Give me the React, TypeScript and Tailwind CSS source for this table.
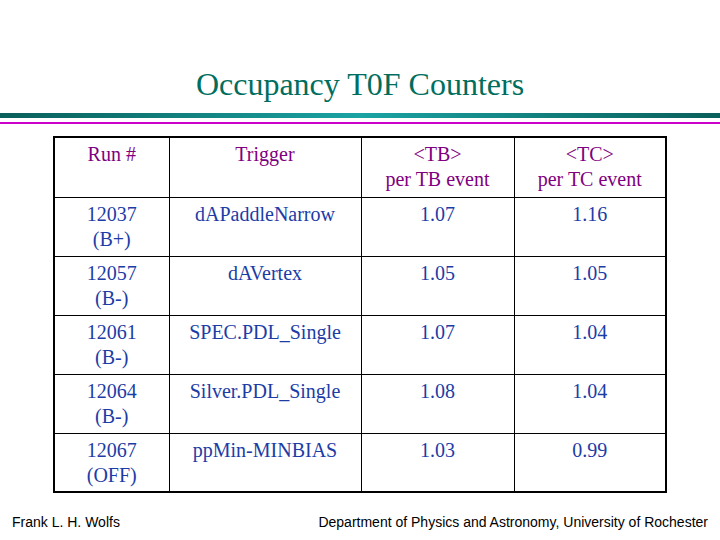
const HEAD = [
  ["Run #"],
  ["Trigger"],
  ["<TB>", "per TB event"],
  ["<TC>", "per TC event"],
];

const ROWS = [
  { run: "12037", mode: "(B+)", trigger: "dAPaddleNarrow", tb: "1.07", tc: "1.16" },
  { run: "12057", mode: "(B-)", trigger: "dAVertex", tb: "1.05", tc: "1.05" },
  { run: "12061", mode: "(B-)", trigger: "SPEC.PDL_Single", tb: "1.07", tc: "1.04" },
  { run: "12064", mode: "(B-)", trigger: "Silver.PDL_Single", tb: "1.08", tc: "1.04" },
  { run: "12067", mode: "(OFF)", trigger: "ppMin-MINBIAS", tb: "1.03", tc: "0.99" },
];

const cell = "border border-black align-top text-center pt-[4px] leading-[25px]";

export default function App() {
  return (
    <div className="w-[720px] h-[540px] bg-white flex flex-col font-['Liberation_Serif',serif] overflow-hidden">
      {/* Title */}
      <div className="h-[113px] flex items-end justify-center pb-[13px]">
        <h1 className="text-[32px] leading-none text-[#006e5e]">Occupancy T0F Counters</h1>
      </div>

      {/* Rule */}
      <div className="h-[5px] bg-gradient-to-r from-[#0a5f5a] via-[#1aa3a3] to-[#0a5f5a]" />
      <div className="h-[4px]" />
      <div className="h-[2px] bg-[#cc00cc]" />

      {/* Table */}
      <div className="pt-[12px] pl-[53px]">
        <table className="border-collapse border-2 border-black text-[20px] w-[612px] table-fixed">
          <colgroup>
            <col className="w-[115px]" />
            <col className="w-[192px]" />
            <col className="w-[153px]" />
            <col className="w-[152px]" />
          </colgroup>
          <thead>
            <tr className="h-[60px]">
              {HEAD.map((lines, i) => (
                <th key={i} className={`${cell} font-normal text-[#800080]`}>
                  {lines.map((l) => (
                    <div key={l}>{l}</div>
                  ))}
                </th>
              ))}
            </tr>
          </thead>
          <tbody className="text-[#1c3ca6]">
            {ROWS.map((r) => (
              <tr key={r.run} className="h-[59px]">
                <td className={cell}>
                  <div>{r.run}</div>
                  <div>{r.mode}</div>
                </td>
                <td className={cell}>{r.trigger}</td>
                <td className={cell}>{r.tb}</td>
                <td className={cell}>{r.tc}</td>
              </tr>
            ))}
          </tbody>
        </table>
      </div>

      {/* Footer */}
      <div className="mt-auto mb-[7px] px-[12px] flex justify-between font-['Liberation_Sans',sans-serif] text-[14px] text-black">
        <span>Frank L. H. Wolfs</span>
        <span>Department of Physics and Astronomy, University of Rochester</span>
      </div>
    </div>
  );
}
